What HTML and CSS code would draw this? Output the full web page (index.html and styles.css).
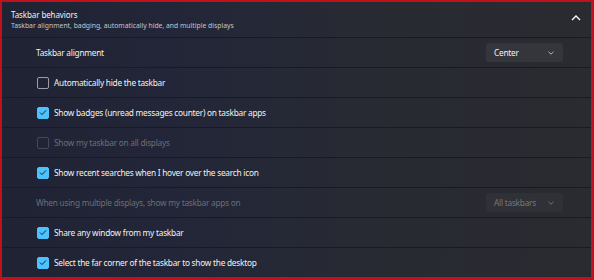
FILE: index.html
```html
<!DOCTYPE html>
<html lang="en">

<head>
    <meta charset="UTF-8">
    <title>Taskbar behaviors</title>
    <link rel="stylesheet" href="styles.css">
</head>

<body>
    <div class="frame">
        <div class="panel">
            <div class="header">
                <div>
                    <div class="title">Taskbar behaviors</div>
                    <div class="subtitle">Taskbar alignment, badging, automatically hide, and multiple displays</div>
                </div>
                <svg class="chevron-up" width="10" height="6" viewBox="0 0 10 6">
                    <path d="M1 5 L5 1 L9 5" fill="none" stroke="#fff" stroke-width="1.3" />
                </svg>
            </div>

            <div class="row">
                <span class="label">Taskbar alignment</span>
                <div class="select">
                    <span>Center</span>
                    <svg width="6" height="4" viewBox="0 0 6 4">
                        <path d="M0.5 0.8 L3 3.2 L5.5 0.8" fill="none" stroke="#c8c8c8" stroke-width="0.9" />
                    </svg>
                </div>
            </div>

            <div class="row">
                <span class="box"></span>
                <span class="label">Automatically hide the taskbar</span>
            </div>

            <div class="row">
                <span class="box checked"><svg width="8" height="7" viewBox="0 0 8 7"><path d="M1 3.6 L3 5.6 L7 1.4" fill="none" stroke="#1a2230" stroke-width="1" /></svg></span>
                <span class="label">Show badges (unread messages counter) on taskbar apps</span>
            </div>

            <div class="row disabled">
                <span class="box"></span>
                <span class="label">Show my taskbar on all displays</span>
            </div>

            <div class="row">
                <span class="box checked"><svg width="8" height="7" viewBox="0 0 8 7"><path d="M1 3.6 L3 5.6 L7 1.4" fill="none" stroke="#1a2230" stroke-width="1" /></svg></span>
                <span class="label">Show recent searches when I hover over the search icon</span>
            </div>

            <div class="row disabled">
                <span class="label">When using multiple displays, show my taskbar apps on</span>
                <div class="select">
                    <span>All taskbars</span>
                    <svg width="6" height="4" viewBox="0 0 6 4">
                        <path d="M0.5 0.8 L3 3.2 L5.5 0.8" fill="none" stroke="#7a7b80" stroke-width="0.9" />
                    </svg>
                </div>
            </div>

            <div class="row">
                <span class="box checked"><svg width="8" height="7" viewBox="0 0 8 7"><path d="M1 3.6 L3 5.6 L7 1.4" fill="none" stroke="#1a2230" stroke-width="1" /></svg></span>
                <span class="label">Share any window from my taskbar</span>
            </div>

            <div class="row">
                <span class="box checked"><svg width="8" height="7" viewBox="0 0 8 7"><path d="M1 3.6 L3 5.6 L7 1.4" fill="none" stroke="#1a2230" stroke-width="1" /></svg></span>
                <span class="label">Select the far corner of the taskbar to show the desktop</span>
            </div>
        </div>
    </div>
</body>

</html>
```

FILE: styles.css
```css
body {
    margin: 0;
    font-family: "Noto Sans", "Open Sans", sans-serif;
    background: #2a2b30;
}

.frame {
    width: 594px;
    height: 280px;
    box-sizing: border-box;
    border: 2px solid #c0121a;
    border-right-width: 3px;
    border-bottom-width: 3px;
    overflow: hidden;
}

.panel {
    height: 100%;
    background: linear-gradient(90deg, #1f2334 0%, #222638 30%, #282a33 62%, #2a2b30 100%);
    color: #f2f2f2;
}

.header {
    height: 35px;
    box-sizing: border-box;
    display: flex;
    align-items: center;
    justify-content: space-between;
    padding: 0 10px 1px 9px;
}

.title {
    font-size: 8px;
    line-height: 13px;
    letter-spacing: -0.1px;
}

.subtitle {
    font-size: 6.8px;
    line-height: 10px;
    color: #c4c6cc;
}

.chevron-up {
    margin-bottom: 2px;
}

.row {
    height: 30px;
    box-sizing: border-box;
    border-top: 1px solid #191b22;
    display: flex;
    align-items: center;
    padding: 0 28px 0 34px;
    font-size: 8.3px;
    letter-spacing: -0.25px;
}

.row .label {
    flex: 1;
}

.box {
    width: 12px;
    height: 12px;
    box-sizing: border-box;
    border: 1px solid #9c9ea6;
    border-radius: 2px;
    margin-left: 1px;
    margin-right: 5px;
    display: flex;
    align-items: center;
    justify-content: center;
}

.box.checked {
    background: #4cc2ff;
    border-color: #4cc2ff;
}

.disabled {
    color: #6b6e79;
}

.disabled .box {
    border-color: #44475a;
}

.select {
    width: 77px;
    height: 19px;
    box-sizing: border-box;
    background: #35363b;
    border-radius: 3px;
    display: flex;
    align-items: center;
    justify-content: space-between;
    padding: 0 9px 0 8px;
    color: #f2f2f2;
}

.disabled .select {
    background: #303136;
    color: #75767c;
}
```
